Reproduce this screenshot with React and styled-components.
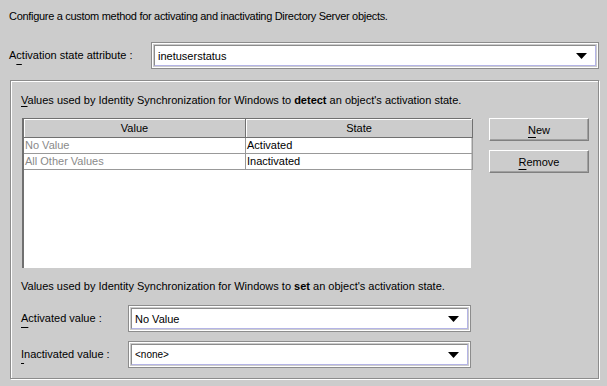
import React from "react";
import styled, { createGlobalStyle } from "styled-components";

const GlobalStyle = createGlobalStyle`
  html, body {
    margin: 0;
    padding: 0;
    background: #cccccc;
  }
  body {
    font-family: "Liberation Sans", Arial, sans-serif;
    font-size: 11px;
    color: #000;
  }
`;

const Page = styled.div`
  width: 607px;
  height: 386px;
  box-sizing: border-box;
  padding: 9px 8px 0 9px;
  background: #cccccc;
  display: flex;
  flex-direction: column;
`;

const Intro = styled.div`
  height: 15px;
  line-height: 15px;
  letter-spacing: -0.3px;
`;

const FieldRow = styled.div`
  display: flex;
  align-items: center;
  margin-top: ${(p) => p.top || 0}px;
`;

const Label = styled.div`
  width: ${(p) => p.width}px;
  flex: none;
  line-height: 15px;
`;

const Mn = styled.span`
  text-decoration: underline;
  text-underline-offset: ${(p) => p.offset || 2}px;
`;

const Combo = styled.div`
  flex: ${(p) => (p.width ? "none" : 1)};
  width: ${(p) => (p.width ? `${p.width}px` : "auto")};
  height: 27px;
  box-sizing: border-box;
  border: 1px solid #8c8c8c;
  box-shadow: inset 1px 1px 0 #ffffff, inset -1px -1px 0 #ffffff;
  padding: 2px;
  background: #cccccc;
  display: flex;
`;

const ComboInner = styled.div`
  flex: 1;
  background: #ffffff;
  border: 1px solid #b4b4e6;
  border-top-color: #8c8c8c;
  border-left-color: #8c8c8c;
  display: flex;
  align-items: center;
  padding-left: 3px;
  padding-right: 8px;
`;

const ComboText = styled.span`
  flex: 1;
  font-size: ${(p) => p.size || 11}px;
`;

const Arrow = () => (
  <svg width="11" height="6" viewBox="0 0 11 6">
    <polygon points="0,0 11,0 5.5,6" fill="#000" />
  </svg>
);

const Group = styled.div`
  margin-top: 11px;
  margin-left: 1px;
  width: 589px;
  height: 299px;
  box-sizing: border-box;
  border: 1px solid #8c8c8c;
  box-shadow: inset 1px 1px 0 #ffffff, 1px 1px 0 #ffffff;
  padding: 12px 10px 0 10px;
  display: flex;
  flex-direction: column;
`;

const GroupText = styled.div`
  line-height: 15px;
  margin-top: ${(p) => p.top || 0}px;
  b {
    font-weight: bold;
  }
`;

const TableRow = styled.div`
  display: flex;
  margin-top: 10px;
  margin-left: 1px;
`;

const TableBox = styled.div`
  width: 449px;
  height: 150px;
  box-sizing: border-box;
  background: #ffffff;
  border-left: 2px solid #707070;
  border-top: 1px solid #707070;
  display: flex;
  flex-direction: column;
`;

const Grid = styled.table`
  border-collapse: collapse;
  width: 447px;
  table-layout: fixed;
`;

const HeadCell = styled.th`
  height: 18px;
  padding: 0;
  background: #cccccc;
  font-weight: normal;
  text-align: center;
  border-right: 1px solid #707070;
  border-bottom: 1px solid #707070;
  box-shadow: inset 1px 1px 0 #ffffff;
  width: ${(p) => p.width}px;
`;

const Cell = styled.td`
  height: 15px;
  padding: 0 0 0 1px;
  border-right: 1px solid #999999;
  border-bottom: 1px solid #999999;
  color: ${(p) => (p.muted ? "#8a8a8a" : "#000")};
  white-space: nowrap;
  line-height: 15px;
`;

const Buttons = styled.div`
  display: flex;
  flex-direction: column;
  gap: 9px;
  margin-left: 18px;
`;

const Button = styled.button`
  width: 100px;
  height: 23px;
  box-sizing: border-box;
  background: #cccccc;
  font-family: inherit;
  font-size: 11px;
  color: #000;
  border: 1px solid;
  border-color: #ffffff #808080 #808080 #ffffff;
  box-shadow: inset -1px -1px 0 #a0a0a0;
  padding: 0;
`;

const columns = [
  { name: "Value", width: 221 },
  { name: "State", width: 226 },
];

const rows = [
  { value: "No Value", state: "Activated" },
  { value: "All Other Values", state: "Inactivated" },
];

export default function App() {
  return (
    <Page>
      <GlobalStyle />
      <Intro>
        Configure a custom method for activating and inactivating Directory
        Server objects.
      </Intro>
      <FieldRow top={18}>
        <Label width={142}>
          A<Mn offset={5}>c</Mn>tivation state attribute :
        </Label>
        <Combo>
          <ComboInner>
            <ComboText>inetuserstatus</ComboText>
            <Arrow />
          </ComboInner>
        </Combo>
      </FieldRow>
      <Group>
        <GroupText>
          <Mn>V</Mn>alues used by Identity Synchronization for Windows to{" "}
          <b>detect</b> an object's activation state.
        </GroupText>
        <TableRow>
          <TableBox>
            <Grid>
              <thead>
                <tr>
                  {columns.map((c) => (
                    <HeadCell key={c.name} width={c.width}>
                      {c.name}
                    </HeadCell>
                  ))}
                </tr>
              </thead>
              <tbody>
                {rows.map((r) => (
                  <tr key={r.value}>
                    <Cell muted>{r.value}</Cell>
                    <Cell>{r.state}</Cell>
                  </tr>
                ))}
              </tbody>
            </Grid>
          </TableBox>
          <Buttons>
            <Button>
              <Mn offset={3}>N</Mn>ew
            </Button>
            <Button>
              <Mn offset={3}>R</Mn>emove
            </Button>
          </Buttons>
        </TableRow>
        <GroupText top={11}>
          Values used by Identity Synchronization for Windows to <b>set</b> an
          object's activation state.
        </GroupText>
        <FieldRow top={11}>
          <Label width={107}>
            <Mn offset={5}>A</Mn>ctivated value :
          </Label>
          <Combo width={343}>
            <ComboInner>
              <ComboText>No Value</ComboText>
              <Arrow />
            </ComboInner>
          </Combo>
        </FieldRow>
        <FieldRow top={9}>
          <Label width={107}>
            <Mn offset={5}>I</Mn>nactivated value :
          </Label>
          <Combo width={343}>
            <ComboInner>
              <ComboText size={10}>&lt;none&gt;</ComboText>
              <Arrow />
            </ComboInner>
          </Combo>
        </FieldRow>
      </Group>
    </Page>
  );
}
